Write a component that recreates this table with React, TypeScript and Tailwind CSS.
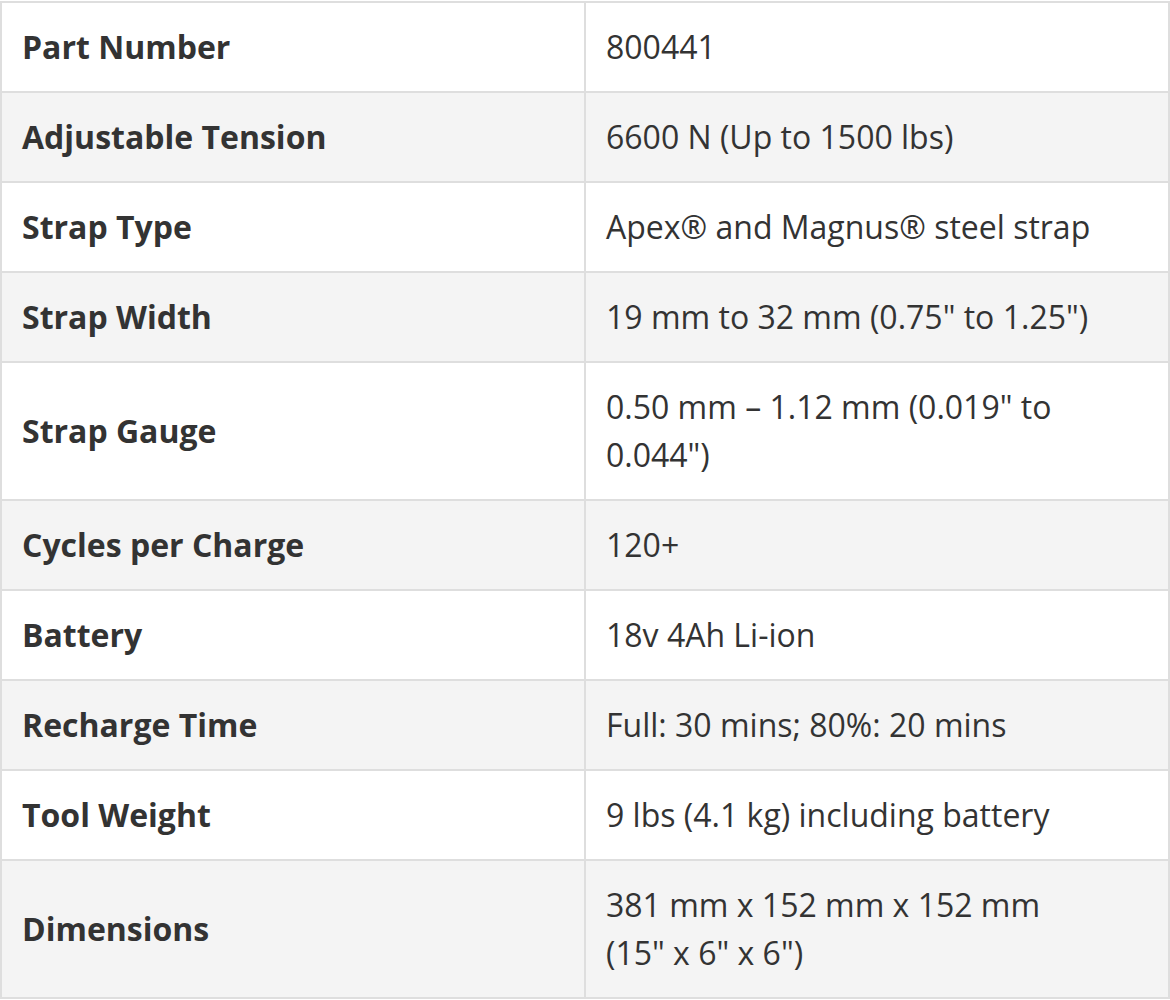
import React from 'react'

const specs: { label: string; value: string }[] = [
  { label: 'Part Number', value: '800441' },
  { label: 'Adjustable Tension', value: '6600 N (Up to 1500 lbs)' },
  { label: 'Strap Type', value: 'Apex® and Magnus® steel strap' },
  { label: 'Strap Width', value: '19 mm to 32 mm (0.75" to 1.25")' },
  { label: 'Strap Gauge', value: '0.50 mm – 1.12 mm (0.019" to 0.044")' },
  { label: 'Cycles per Charge', value: '120+' },
  { label: 'Battery', value: '18v 4Ah Li-ion' },
  { label: 'Recharge Time', value: 'Full: 30 mins; 80%: 20 mins' },
  { label: 'Tool Weight', value: '9 lbs (4.1 kg) including battery' },
  { label: 'Dimensions', value: '381 mm x 152 mm x 152 mm (15" x 6" x 6")' },
]

export default function App() {
  return (
    <div className="min-h-screen bg-white pt-px font-['Open_Sans',sans-serif] text-[32px] leading-[48px] text-[#333]">
      <table className="w-[1170px] table-fixed border-separate border-spacing-0 border-t-2 border-l-2 border-[#dedede]">
        <colgroup>
          <col className="w-[584px]" />
          <col />
        </colgroup>
        <tbody>
          {specs.map((row, i) => (
            <tr key={row.label} className={i % 2 === 1 ? 'bg-[#f4f4f4]' : 'bg-white'}>
              <td className="border-r-2 border-b-2 border-[#dedede] px-5 py-5 align-middle font-bold">
                {row.label}
              </td>
              <td className="border-r-2 border-b-2 border-[#dedede] py-5 pl-5 pr-16 align-middle">
                {row.value}
              </td>
            </tr>
          ))}
        </tbody>
      </table>
    </div>
  )
}
